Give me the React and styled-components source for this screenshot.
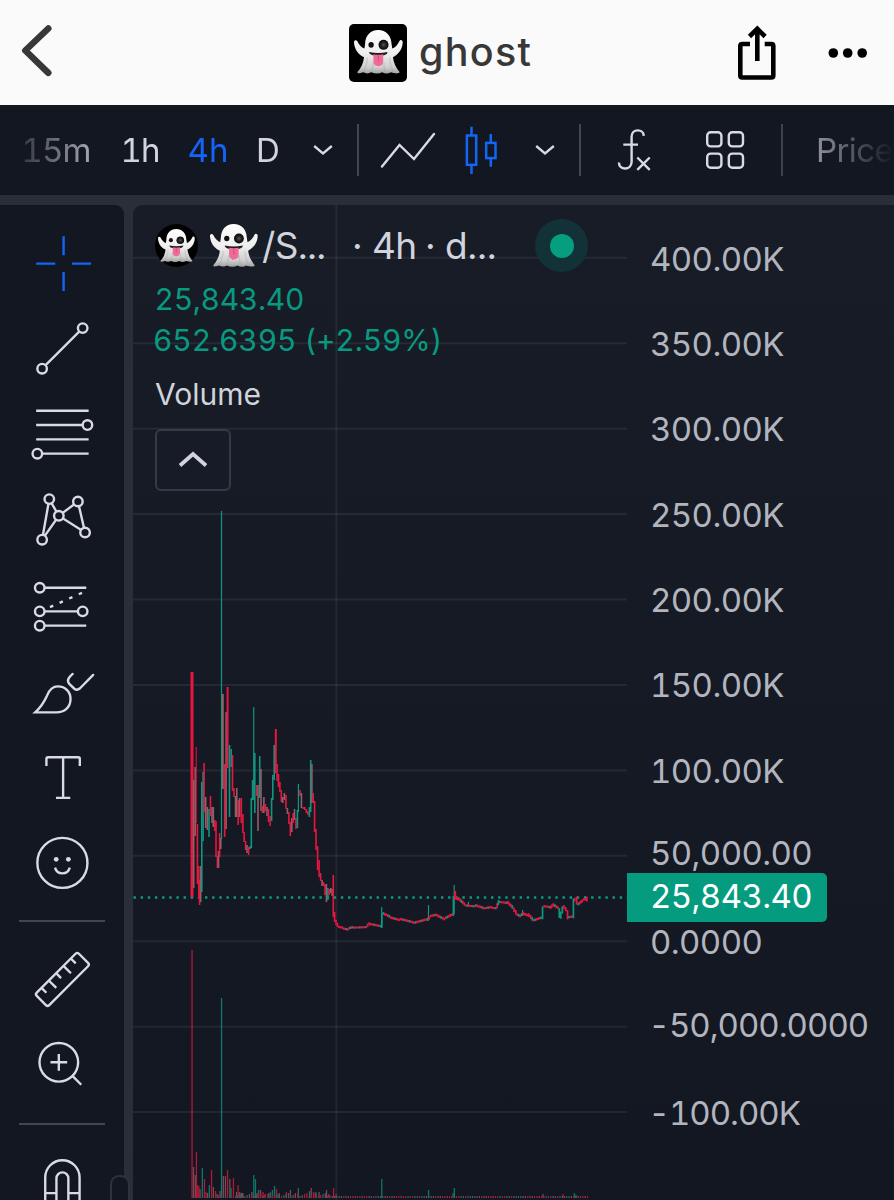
import React from 'react';
import styled, { createGlobalStyle } from 'styled-components';

const GlobalStyle = createGlobalStyle`
  * { box-sizing: border-box; }

  body {
    margin: 0;
    background: #2a2e39;
    font-family: Inter, "Liberation Sans", sans-serif;
    font-variant-numeric: tabular-nums;
  }
`;

const Screen = styled.div`
  display: flex;
  flex-direction: column;
  width: 894px;
  height: 1200px;
  overflow: hidden;
  background: #2a2e39;
  color: #d1d4dc;
`;

const Header = styled.header`
  display: flex;
  align-items: center;
  flex: none;
  height: 105px;
  padding: 0 24px 0 20px;
  background: #fafafa;

  > svg { flex: none; }
`;

const TitleGroup = styled.div`
  display: flex;
  align-items: center;
  width: 384px;
  margin-left: 293px;
`;

const TokenLogo = styled.div`
  display: flex;
  align-items: center;
  justify-content: center;
  flex: none;
  width: ${p => p.size}px;
  height: ${p => p.size}px;
  border-radius: ${p => (p.round ? '50%' : '5px')};
  background: #000;
`;

const Title = styled.h1`
  margin: -2px 0 0 12px;
  color: #383838;
  font-size: 39.5px;
  font-weight: 500;
  line-height: 50px;
  letter-spacing: 1.3px;
`;

const ShareIcon = styled.svg`
  margin-bottom: 3px;
`;

const MoreIcon = styled.svg`
  margin-left: 45px;
`;

const Toolbar = styled.nav`
  flex: none;
  height: 90px;
  background: #131722;
`;

const ToolbarItems = styled.div`
  display: flex;
  align-items: center;
  height: 90px;
  padding-left: 12px;
  overflow: hidden;
  mask-image: linear-gradient(to right, transparent, #000 120px, #000 774px, transparent);
`;

const Cell = styled.div`
  display: flex;
  align-items: center;
  justify-content: center;
  flex: none;
  width: ${p => p.w}px;
  height: 90px;
  color: ${p => (p.$active ? '#1265f6' : '#d1d4dc')};
  font-size: 33px;
  letter-spacing: ${p => p.$spacing || 0}px;
`;

const Separator = styled.div`
  width: 2px;
  height: 52px;
  background: #434651;
`;

const PriceLabel = styled.div`
  flex: none;
  margin-left: 18px;
  font-size: 33px;
  letter-spacing: -0.6px;
`;

const Body = styled.div`
  display: flex;
  flex: 1;
  min-height: 0;
  margin-top: 10px;
`;

const Sidebar = styled.aside`
  position: relative;
  display: flex;
  flex-direction: column;
  flex: none;
  width: 124px;
  height: 995px;
  padding: 24px 0 0 28.6px;
  border-top-right-radius: 9px;
  background: #131722;
`;

const ToolIcon = styled.svg`
  flex: none;
  width: 66.8px;
  height: 66.8px;
  margin-bottom: 18.9px;
  overflow: visible;
  fill: none;
  stroke: ${p => (p.$active ? '#1265f6' : '#d8dbe4')};
  stroke-width: 1;
`;

const SidebarRule = styled.div`
  flex: none;
  width: 86px;
  height: 2px;
  margin: ${p => p.$top}px 0 24.1px -9.6px;
  background: #434651;
`;

const ScrollTab = styled.div`
  position: absolute;
  left: 110px;
  top: 970px;
  width: 20px;
  height: 50px;
  border: 2px solid #2e323d;
  border-radius: 9px;
  background: #131722;
`;

const ChartPane = styled.main`
  display: flex;
  flex: 1;
  height: 995px;
  margin-left: 9px;
  border-top-left-radius: 9px;
  background: linear-gradient(#181c27, #131722);
`;

const Plot = styled.section`
  position: relative;
  flex: none;
  width: 494px;
  height: 995px;
`;

const PlotSvg = styled.svg`
  display: block;
`;

// sits over the candles
const Legend = styled.div`
  position: absolute;
  left: 22px;
  top: 14px;
  width: 460px;
`;

const SymbolRow = styled.div`
  display: flex;
  align-items: center;
  height: 53px;
  margin-bottom: 7px;
  font-size: 37px;

  > svg { flex: none; margin-left: 12px; }
`;

const SymbolText = styled.span`
  width: ${p => p.w}px;
  margin-left: ${p => p.$left || 0}px;
  white-space: nowrap;
  letter-spacing: ${p => p.$spacing || 0}px;
`;

const Status = styled.div`
  display: flex;
  align-items: center;
  justify-content: center;
  flex: none;
  width: 53px;
  height: 53px;
  border-radius: 50%;
  background: #123237;

  &::after {
    content: '';
    width: 24px;
    height: 24px;
    border-radius: 50%;
    background: #059f80;
  }
`;

const Quote = styled.div`
  margin-left: ${p => p.$left || 0}px;
  color: #089981;
  font-size: 30px;
  line-height: 41px;
  letter-spacing: ${p => p.$spacing}px;
  white-space: nowrap;
`;

const StudyName = styled.div`
  margin-top: 12px;
  font-size: 30px;
  line-height: 42px;
`;

const CollapseButton = styled.button`
  display: flex;
  align-items: center;
  justify-content: center;
  width: 76px;
  height: 62px;
  margin-top: 14px;
  padding: 0;
  border: 2px solid #363a45;
  border-radius: 6px;
  background: #171b27;
`;

const PriceAxis = styled.div`
  display: flex;
  flex-direction: column;
  align-items: flex-start;
  padding-top: 33.5px;
`;

const AxisLabel = styled.div`
  flex: none;
  height: 40px;
  margin-top: ${p => p.gap}px;
  padding-left: ${p => (p.$negative ? 21.5 : 23)}px;
  color: #b2b5be;
  font-size: 33px;
  line-height: 40px;
  letter-spacing: ${p => (p.$negative ? -1 : -0.6)}px;
  white-space: nowrap;
`;

const LastPrice = styled(AxisLabel)`
  width: 200px;
  height: 49px;
  border-radius: 0 5px 5px 0;
  background: #059b7f;
  color: #fff;
  line-height: 47px;
`;

const Ghost = ({ width }) => (
  <svg width={width} height={width * 0.9} viewBox="0 0 146 131">
    <defs>
      <linearGradient id="ghostBody" x1="0" y1="0" x2="0" y2="1">
        <stop offset="0" stopColor="#fff" />
        <stop offset="0.55" stopColor="#ededed" />
        <stop offset="0.85" stopColor="#cfcfcf" />
        <stop offset="1" stopColor="#a2a2a2" />
      </linearGradient>
      <radialGradient id="ghostEye">
        <stop offset="0" stopColor="#555" />
        <stop offset="0.5" stopColor="#222" />
        <stop offset="1" stopColor="#080808" />
      </radialGradient>
    </defs>
    <path
      fill="url(#ghostBody)"
      d="M72 0C48 0 34 17 33 42l-2 13C22 52 14 42 10 33 6 28-1 30 0 38c2 22 14 36 30 43-2 17-9 33-20 44 0 6 8 4 18 1 10 6 18 2 24 0 10 5 22 5 32 0 8 5 18 5 26 0 10 3 24 6 26-1-10-11-18-27-20-44 14-7 28-21 29-43 1-8-7-11-10-5-4 9-12 19-21 22l-2-13C111 17 96 0 72 0Z"
    />
    <path d="M40 82c-1 18-5 30-12 42M106 82c1 18 5 30 11 42M57 96c0 12-2 20-5 28M89 96c0 12 1 20 3 28" fill="none" stroke="#999" strokeOpacity="0.3" strokeWidth="4" />
    <ellipse cx="51" cy="44" rx="8" ry="8.5" fill="#111" />
    <circle cx="88" cy="44" r="15" fill="url(#ghostEye)" />
    <path d="M45 65c18 4 36 4 55 0-1 8-8 11-27 11S46 73 45 65Z" fill="#26191c" />
    <path d="M58 72q14 3 29 0v22c0 18-29 18-29 0Z" fill="#ee6b99" />
    <path d="M72.5 75v18" stroke="#cf4a7c" strokeWidth="3" />
  </svg>
);

const Chevron = () => (
  <svg width="24" height="14" viewBox="0 0 24 14" fill="none" stroke="#d8dbe4" strokeWidth="2.3">
    <path d="M3.2 3l8.8 7.500 8.800-7.500" />
  </svg>
);

const Node = ({ x, y }) => <circle cx={x} cy={y} r="2" fill="#131722" />;

const COLORS = { r: '#ea163f', g: '#0f9580', n: '#8f6067' };

// x, high, low, colour, width
const candles = [
  [192, 672, 897, 'r', 3], [193.7, 780, 888, 'n'], [195.2, 767, 836, 'n'], [196.2, 747, 823, 'r', 1],
  [197.4, 824, 884, 'r'], [198.8, 866, 898, 'r'], [199.6, 880, 905, 'r'], [200.7, 866, 902, 'n'],
  [201.8, 782, 892, 'g'], [203.1, 772, 841, 'g'], [204.1, 763, 812, 'r'], [205.7, 797, 828, 'n'],
  [207.3, 807, 830, 'n'], [209, 809, 837, 'g'], [210.5, 796, 816, 'r'], [212, 807, 823, 'n'],
  [213.3, 807, 827, 'n'], [214.7, 820, 831, 'r'], [216, 821, 857, 'r'], [217.4, 856, 868, 'r'],
  [218.5, 851, 868, 'n'], [219.6, 833, 857, 'r'], [220.8, 838, 849, 'n'], [221.5, 511, 839, 'g', 1.2],
  [222.8, 694, 789, 'n', 2], [224.7, 764, 837, 'r'], [226.1, 712, 829, 'n'], [227.6, 687, 768, 'r', 2],
  [229.5, 745, 817, 'g'], [231.2, 749, 767, 'g'], [232.5, 755, 791, 'r'], [234, 788, 797, 'r'],
  [235.5, 796, 817, 'n'], [236.8, 788, 817, 'n'], [238.2, 800, 825, 'r'], [239.6, 798, 817, 'n'],
  [241.3, 798, 823, 'r'], [242.9, 814, 833, 'r'], [244.1, 832, 842, 'r'], [245.6, 841, 850, 'r'],
  [247, 845, 853, 'n'], [248.6, 847, 855, 'r'], [250.1, 846, 849, 'g'], [251.3, 798, 848, 'g'],
  [252.6, 780, 800, 'g'], [253.7, 707, 800, 'g', 1.2], [254.8, 753, 813, 'g'], [256.7, 785, 796, 'r'],
  [258, 785, 831, 'n'], [259.7, 756, 798, 'g'], [261, 769, 811, 'n'], [262.4, 806, 813, 'r'],
  [263.9, 797, 813, 'n'], [265.4, 804, 811, 'r'], [267, 807, 816, 'n'], [268.5, 809, 822, 'r'],
  [270.1, 816, 826, 'r'], [271.6, 798, 821, 'g'], [272.8, 775, 800, 'g'], [274.2, 745, 780, 'g'],
  [275.8, 729, 773, 'r', 2], [277.1, 764, 781, 'r'], [278.5, 774, 787, 'r'], [279.9, 782, 792, 'r'],
  [281.3, 790, 802, 'r'], [282.8, 797, 803, 'n'], [284.4, 793, 800, 'n'], [286, 795, 809, 'r'],
  [287.4, 808, 814, 'n'], [288.9, 812, 824, 'r'], [290.3, 822, 836, 'r'], [291.8, 818, 832, 'n'],
  [293.2, 813, 823, 'r'], [294.5, 809, 820, 'n'], [296, 818, 829, 'r'], [297.4, 810, 828, 'g'],
  [298.4, 784, 812, 'g', 1.2], [300, 790, 796, 'r'], [301.4, 793, 808, 'n'], [303, 807, 809, 'r'],
  [304.8, 807, 810, 'r'], [306.3, 809, 813, 'r'], [307.9, 811, 815, 'r'], [309.4, 807, 817, 'g'],
  [310.7, 760, 812, 'g'], [311.9, 764, 803, 'n'], [313.2, 793, 803, 'r'], [314.6, 801, 832, 'r'],
  [316, 829, 850, 'r'], [317.6, 846, 870, 'r'], [319.1, 860, 877, 'r'], [320.6, 873, 881, 'r'],
  [322.1, 880, 886, 'n'], [323.5, 882, 886, 'r'], [325, 884, 895, 'r'], [326.4, 884, 902, 'n'],
  [327.9, 888, 900, 'g'], [329.3, 889, 895, 'r'], [330.8, 888, 893, 'n'], [332.1, 889, 896, 'n'],
  [333.3, 875, 917, 'r'], [334.6, 912, 922, 'r'], [336, 920, 925, 'r'], [337.4, 923, 927, 'r'],
  [381.7, 907, 926, 'g', 1.2], [428.5, 905, 919, 'g', 1.2], [454.2, 885, 914, 'g', 1.2], [455.2, 891, 899, 'r', 2],
  [468.4, 902, 907, 'g', 1.2], [522.6, 910, 916, 'g', 1.2],
];

const tail = [
  [338, 926.7], [343, 927.7], [348.5, 928.8], [353, 927.3], [366.7, 926.7], [370, 924], [381, 926.2],
  [382.5, 913.5], [390, 917], [400, 919.7], [413, 923], [427, 919.3], [430, 916.5], [437, 915], [445, 919],
  [452.7, 915], [454, 897], [458, 898.5], [465, 905], [475, 906], [483, 908.5], [491.7, 907], [496.5, 907.5],
  [499, 901.5], [507, 902.5], [513, 908.5], [516.7, 913.5], [520.7, 915.5], [524, 913.5], [528, 915],
  [533, 920.5], [541.7, 917.5], [543.3, 906.5], [550, 907.5], [552.5, 905], [558.5, 909], [560, 917],
  [563, 906.5], [566.7, 910.7], [568.3, 918], [572.7, 917.3], [574, 899.5], [575.5, 898], [577.7, 904],
  [583, 900], [586, 900.5], [587.7, 897.7],
];

const volumes = [
  [192, 950, 'r'], [193.5, 1167, 'n'], [195.3, 1175, 'n'], [196.4, 1152, 'r'], [197.7, 1185, 'r'], [198.8, 1186, 'r'],
  [200, 1189, 'n'], [202.3, 1168, 'g'], [204.4, 1179, 'r'], [206, 1192, 'r'], [207.5, 1193, 'n'], [209.3, 1185, 'g'],
  [211.5, 1170, 'r'], [213.3, 1187, 'n'], [215.5, 1191, 'r'], [217, 1194, 'n'], [218.5, 1195, 'r'], [220, 1191, 'n'],
  [221.5, 998, 'g'], [223.3, 1176, 'n'], [225.4, 1176, 'n'], [227.5, 1170, 'r'], [229.8, 1179, 'n'], [231, 1188, 'g'],
  [233.4, 1178, 'r'], [236.5, 1192, 'n'], [238, 1185, 'r'], [239.7, 1192, 'n'], [241.5, 1193, 'g'], [243, 1193, 'r'],
  [251.8, 1192, 'g'], [253.7, 1175, 'g'], [255.4, 1179, 'g'], [257, 1193, 'n'], [258.5, 1190, 'g'], [260.5, 1190, 'n'],
  [263, 1192, 'r'], [265, 1194, 'n'], [268.5, 1193, 'g'], [270.5, 1192, 'r'], [272.4, 1190, 'g'], [274.5, 1186, 'g'],
  [276.5, 1189, 'r'], [279, 1194, 'g'], [286.3, 1192, 'r'], [290.4, 1190, 'n'], [295.3, 1193, 'r'], [298.3, 1188, 'g'],
  [309.5, 1191, 'g'], [311.2, 1188, 'n'], [313.5, 1192, 'r'], [315.5, 1192, 'r'], [319, 1192, 'n'], [326.5, 1190, 'n'],
  [328.5, 1194, 'r'], [333.5, 1188, 'r'], [336, 1194, 'r'], [381.7, 1179, 'g'], [428.5, 1190, 'g'], [453, 1193, 'g'],
  [454.3, 1188, 'g'], [543, 1194, 'n'], [563, 1194, 'r'], [574.3, 1193, 'g'], [576, 1195, 'g'],
];

const tailBars = [];
for (let i = 1; i < tail.length; i++) {
  const [x0, y0] = tail[i - 1];
  const [x1, y1] = tail[i];
  const steps = Math.max(1, Math.round((x1 - x0) / 1.5));
  for (let s = 0; s < steps; s++) {
    const a = y0 + ((y1 - y0) * s) / steps;
    const b = y0 + ((y1 - y0) * (s + 1)) / steps;
    const wobble = (((i * 7 + s * 5) % 5) - 2) * 0.4;
    const flip = (i * 3 + s * 7) % 4 === 0;
    tailBars.push({
      x: x0 + ((x1 - x0) * (s + 0.5)) / steps,
      top: Math.min(a, b) - 1 + wobble,
      bottom: Math.max(a, b) + 1 + wobble,
      color: y1 < y0 - 8 || flip ? 'g' : 'r',
    });
  }
}

const smallVolumes = Array.from({ length: 154 }, (_, i) => ({
  x: 235 + i * 2.3,
  h: i < 42 ? 2 + ((i * 5) % 4) : 2,
  color: ['r', 'n', 'r', 'g', 'n'][(i * 3 + (i >> 2)) % 5],
}));

const gridRows = Array.from({ length: 11 }, (_, i) => 257.8 + i * 85.43);

const Chart = () => (
  <PlotSvg width="494" height="995" viewBox="133 205 494 995">
    <g stroke="#f2f2f2" strokeOpacity="0.07" strokeWidth="2">
      {gridRows.map(y => <path key={y} d={`M133 ${y}H627`} />)}
      <path d="M336.3 205V1200" />
    </g>
    <g opacity="0.75">
      {volumes.map(([x, top, c]) => (
        <rect key={x} x={x - 0.6} y={top} width="1.3" height={1198 - top} fill={COLORS[c]} />
      ))}
      {smallVolumes.map(v => (
        <rect key={v.x} x={v.x} y={1198 - v.h} width="1.2" height={v.h} fill={COLORS[v.color]} />
      ))}
    </g>
    <path d="M133.5 897.5H627" stroke="#0c9a81" strokeWidth="2.4" strokeDasharray="2.4 4.75" />
    {candles.map(([x, top, bottom, c, w = 1.6]) => (
      <rect key={x} x={x - w / 2} y={top} width={w} height={bottom - top} fill={COLORS[c]} />
    ))}
    {tailBars.map(b => (
      <rect key={b.x} x={b.x - 0.8} y={b.top} width="1.7" height={b.bottom - b.top} fill={COLORS[b.color]} />
    ))}
  </PlotSvg>
);

const Tools = () => (
  <Sidebar>
    <ToolIcon viewBox="0 0 28 28" $active>
      <path d="M14.5 3v8M14.5 18v8M3 14.500h8M18 14.500h8" />
    </ToolIcon>
    <ToolIcon viewBox="0 0 28 28">
      <path d="M5.5 22.500l17-17" />
      <Node x={5.5} y={22.5} />
      <Node x={22.5} y={5.5} />
    </ToolIcon>
    <ToolIcon viewBox="0 0 28 28">
      <path d="M3 4.500h22M3 10.500h20M3 16.500h22M5 22.500h20" />
      <Node x={24.5} y={10.5} />
      <Node x={3.5} y={22.5} />
    </ToolIcon>
    <ToolIcon viewBox="0 0 28 28">
      <path d="M5.5 22.500l3-17 4 7 8-6 3 13-11-7z" />
      <Node x={8.5} y={5.5} />
      <Node x={20.5} y={6.5} />
      <Node x={12.5} y={12.5} />
      <Node x={23.5} y={19.5} />
      <Node x={5.5} y={22.5} />
    </ToolIcon>
    <ToolIcon viewBox="0 0 28 28">
      <path d="M4.5 6.600H24M4.500 16.500h18M4.500 22.500H24" />
      <path d="M8.8 14.700L22.500 8.600" strokeDasharray="1.5 2.9" />
      <Node x={4.5} y={6.6} />
      <Node x={4.5} y={16.5} />
      <Node x={22.5} y={16.5} />
      <Node x={4.5} y={22.5} />
    </ToolIcon>
    <ToolIcon viewBox="0 0 28 28">
      <path d="M2.6 23.200C5 21 6.500 18.500 7.600 16.100 8.500 13.800 9.800 12.300 12.100 12.300c3.200 0 5.400 2.400 5.300 5.400 0 3.400-2.600 5.500-5.900 5.500Z" />
      <path d="M18.3 7.100c-1.900 1.600-2.600 2.900-1.300 4.300l2 1.900c.9.700 1.600.5 2.400-.2l5.500-5.600" strokeLinecap="round" />
    </ToolIcon>
    <ToolIcon viewBox="0 0 28 28">
      <path d="M7.3 9.600V6.700q0-.7.700-.7h12.600q.7 0 .7.700v2.900M14.300 6v17M11.300 23h6" />
    </ToolIcon>
    <ToolIcon viewBox="0 0 28 28">
      <circle cx="14" cy="14.2" r="10.5" />
      <circle cx="11.4" cy="12.7" r="1" fill="#d8dbe4" stroke="none" />
      <circle cx="16.5" cy="12.7" r="1" fill="#d8dbe4" stroke="none" />
      <path d="M10.9 16.200c.9 3.200 5.300 3.200 6.200 0" />
    </ToolIcon>
    <SidebarRule $top={5.7} />
    <ToolIcon viewBox="0 0 28 28">
      <g transform="rotate(-45 14 14)">
        <rect x="1.500" y="10.300" width="25" height="7.400" rx="1" />
        <path d="M5.3 10.300v2.900M9.650 10.300v4.400M14 10.300v2.900M18.350 10.300v4.400M22.700 10.300v2.900" />
      </g>
    </ToolIcon>
    <ToolIcon viewBox="0 0 28 28">
      <circle cx="12.5" cy="12.7" r="8.100" />
      <path d="M12.5 9.200v7M9 12.700h7M18.200 18.400l3.700 3.700" />
    </ToolIcon>
    <SidebarRule $top={5.7} />
    <ToolIcon viewBox="0 0 28 28">
      <path d="M6.8 26V11.900a7.200 7.200 0 0 1 14.400 0V26M11.500 26V12.300a2.500 2.500 0 0 1 5 0V26M6.800 18.500h4.700M16.500 18.500h4.700" />
    </ToolIcon>
    <ScrollTab />
  </Sidebar>
);

const App = () => (
  <>
    <GlobalStyle />
    <Screen>
      <Header>
        <svg width="36" height="56" viewBox="0 0 36 56" fill="none" stroke="#383838" strokeWidth="6.5" strokeLinecap="round" strokeLinejoin="round">
          <path d="M28.3 3.500L5.300 25.500l23 22.300" />
        </svg>
        <TitleGroup>
          <TokenLogo size={58}><Ghost width={49} /></TokenLogo>
          <Title>ghost</Title>
        </TitleGroup>
        <ShareIcon width="52" height="60" viewBox="0 0 52 60" fill="none" stroke="#000" strokeWidth="4.6">
          <path d="M19 23H11.300q-2 0-2 2v29.500q0 2 2 2h29q2 0 2-2V25q0-2-2-2H33.700" />
          <path d="M26.3 40V10M18.500 15.500l7.800-7.800 7.800 7.800" />
        </ShareIcon>
        <MoreIcon width="42" height="12" viewBox="0 0 42 12">
          <circle cx="5.3" cy="6" r="4.8" />
          <circle cx="19.7" cy="6" r="4.8" />
          <circle cx="34.2" cy="6" r="4.8" />
        </MoreIcon>
      </Header>

      <Toolbar>
        <ToolbarItems>
          <Cell w={88} $spacing={-0.8}>15m</Cell>
          <Cell w={80} $spacing={-1}>1h</Cell>
          <Cell w={56} $active>4h</Cell>
          <Cell w={64}>D</Cell>
          <Cell w={45}><Chevron /></Cell>
          <Cell w={26}><Separator /></Cell>
          <Cell w={74}>
            <svg width="58" height="50" viewBox="0 0 58 50" fill="none" stroke="#d8dbe4" strokeWidth="2.4" strokeLinecap="round">
              <path d="M3 41.500L20.500 20 35 34 55 9" />
            </svg>
          </Cell>
          <Cell w={71}>
            <svg width="36" height="50" viewBox="0 0 36 50" fill="none" stroke="#1265f6" strokeWidth="2.5">
              <rect x="3.9" y="10.5" width="9.3" height="29.3" />
              <rect x="23.2" y="17.9" width="9.3" height="15.2" />
              <path d="M8.500 1.700v8.800M8.500 39.800V49M27.800 9v8.900M27.800 33.100v8.600" />
            </svg>
          </Cell>
          <Cell w={57}><Chevron /></Cell>
          <Cell w={14}><Separator /></Cell>
          <Cell w={97}>
            <svg width="44" height="52" viewBox="0 0 44 52" fill="none" stroke="#d8dbe4" strokeWidth="2.4">
              <path d="M29.800 11.900C29.500 4.500 17.800 4.500 17.600 12.500V38C17.300 46.600 5 46.600 4.900 38.600M9.300 20.600H24M23.300 33.500l12.400 12.400M35.700 33.500L23.300 45.900" />
            </svg>
          </Cell>
          <Cell w={82}>
            <svg width="40" height="40" viewBox="0 0 40 40" fill="none" stroke="#d8dbe4" strokeWidth="2.4">
              <rect x="2.2" y="2.2" width="14.2" height="14.2" rx="3.5" />
              <rect x="23.8" y="2.2" width="14.2" height="14.2" rx="3.5" />
              <rect x="2.2" y="23.6" width="14.2" height="14.2" rx="3.5" />
              <rect x="23.8" y="23.6" width="14.2" height="14.2" rx="3.5" />
            </svg>
          </Cell>
          <Cell w={32}><Separator /></Cell>
          <PriceLabel>Price</PriceLabel>
        </ToolbarItems>
      </Toolbar>

      <Body>
        <Tools />
        <ChartPane>
          <Plot>
            <Chart />
            <Legend>
              <SymbolRow>
                <TokenLogo size={43} round><Ghost width={37} /></TokenLogo>
                <Ghost width={48} />
                <SymbolText w={88} $left={4} $spacing={-0.7}>/S...</SymbolText>
                <SymbolText w={20} $left={2}>·</SymbolText>
                <SymbolText w={53} $spacing={-0.8}>4h</SymbolText>
                <SymbolText w={20}>·</SymbolText>
                <SymbolText w={90} $spacing={-0.3}>d...</SymbolText>
                <Status />
              </SymbolRow>
              <Quote $spacing={-0.3} $left={-0.5}>25,843.40</Quote>
              <Quote $spacing={-0.1} $left={-2}>652.6395 (+2.59%)</Quote>
              <StudyName>Volume</StudyName>
              <CollapseButton>
                <svg width="32" height="20" viewBox="0 0 32 20" fill="none" stroke="#d1d4dc" strokeWidth="3.8">
                  <path d="M3 15.500L16 4l13 11.500" />
                </svg>
              </CollapseButton>
            </Legend>
          </Plot>
          <PriceAxis>
            <AxisLabel gap={0}>400.00K</AxisLabel>
            <AxisLabel gap={45.4}>350.00K</AxisLabel>
            <AxisLabel gap={45.4}>300.00K</AxisLabel>
            <AxisLabel gap={45.4}>250.00K</AxisLabel>
            <AxisLabel gap={45.4}>200.00K</AxisLabel>
            <AxisLabel gap={45.4}>150.00K</AxisLabel>
            <AxisLabel gap={45.4}>100.00K</AxisLabel>
            <AxisLabel gap={42.6}>50,000.00</AxisLabel>
            <LastPrice gap={-0.5}>25,843.40</LastPrice>
            <AxisLabel gap={0}>0.0000</AxisLabel>
            <AxisLabel gap={43} $negative>-50,000.0000</AxisLabel>
            <AxisLabel gap={48} $negative>-100.00K</AxisLabel>
          </PriceAxis>
        </ChartPane>
      </Body>
    </Screen>
  </>
);

export default App;
